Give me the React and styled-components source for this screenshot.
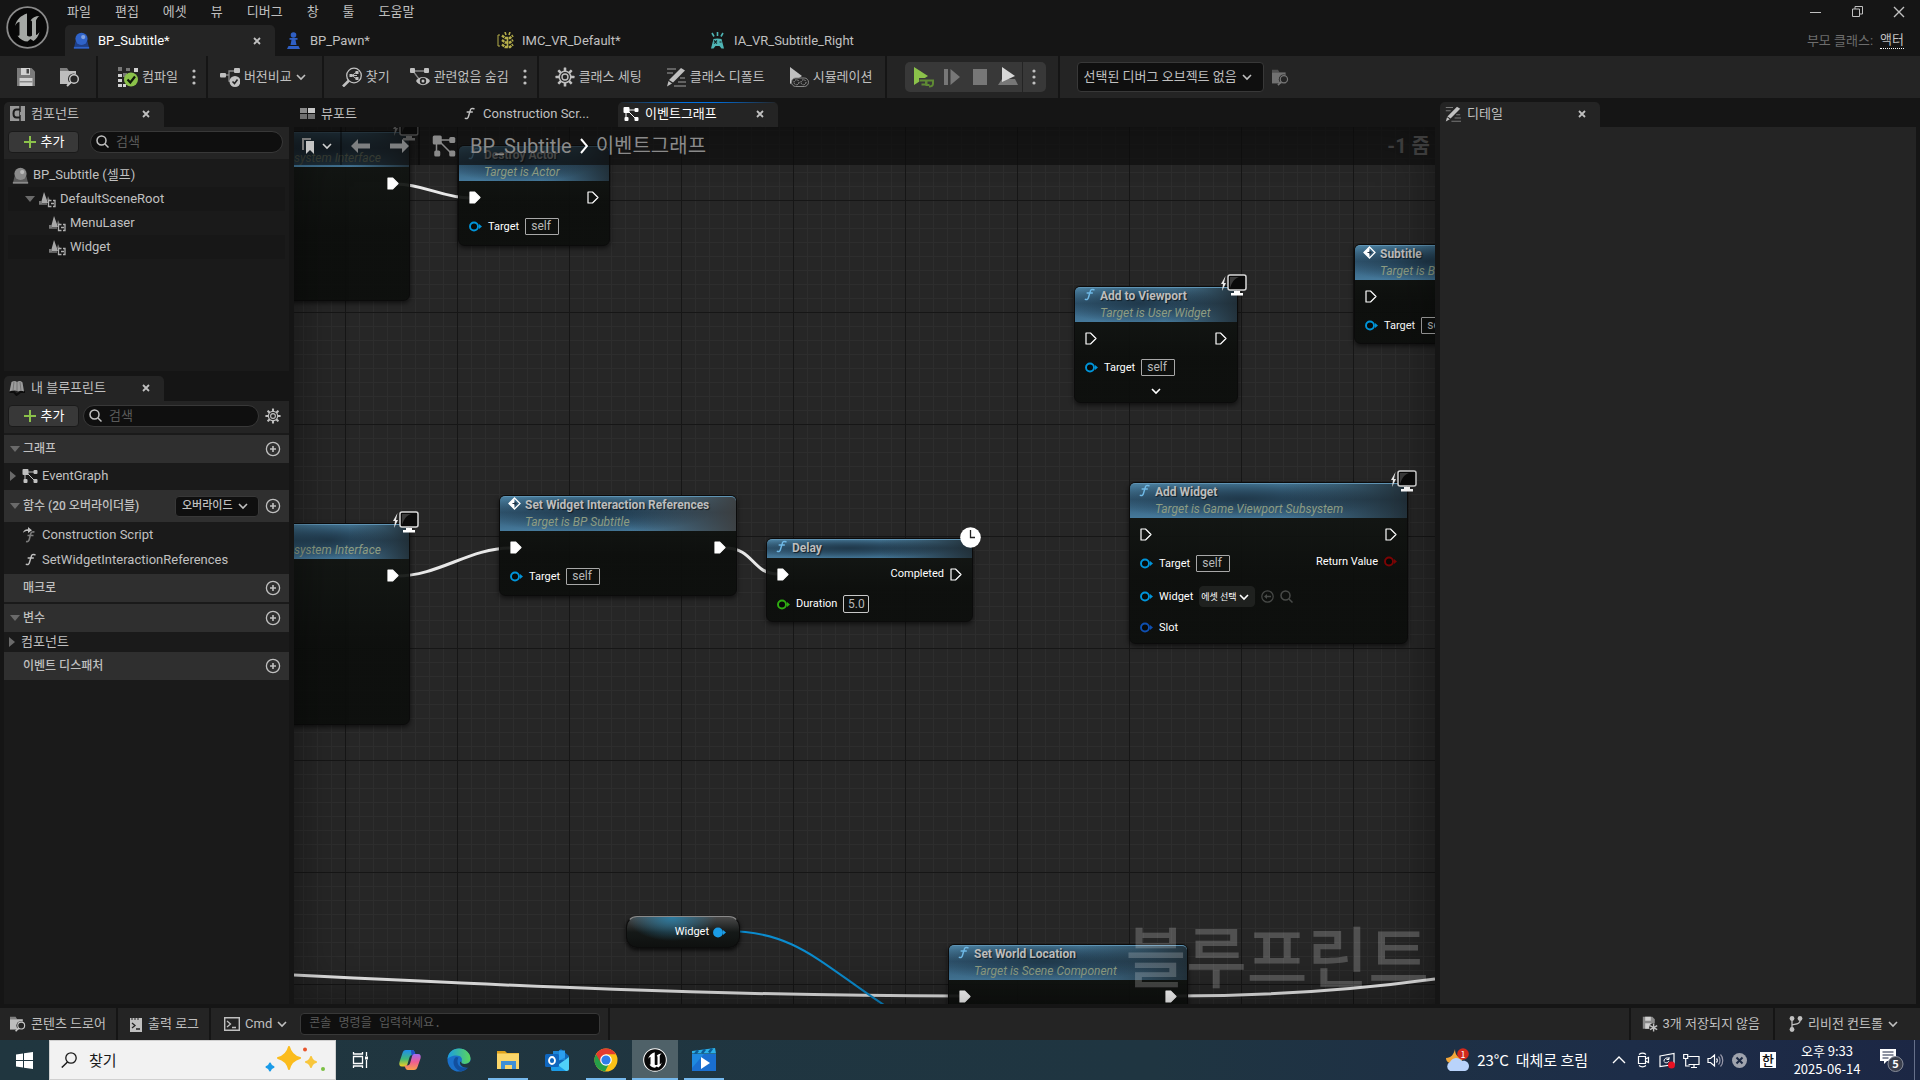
import { useState } from "react";
import styled, { createGlobalStyle, css } from "styled-components";

const colors = {
  frame: "#151515",
  panel: "#242424",
  recess: "#1a1a1a",
  header: "#2f2f2f",
  input: "#0f0f0f",
  line: "#383838",
  text: "#c0c0c0",
  bright: "#ffffff",
  dim: "#6d6d6d",
  green: "#8bc24a",
  blue: "#0070e0",
  object: "#0094d9",
};

const GlobalStyle = createGlobalStyle`
  * { box-sizing: border-box; }
  body {
    margin: 0;
    background: ${colors.frame};
    color: ${colors.text};
    font: 13px/16px Roboto, "Noto Sans CJK KR", sans-serif;
  }
  button, input, select {
    font: inherit;
    color: inherit;
    border: 0;
    margin: 0;
    padding: 0;
    background: none;
    outline: none;
  }
  svg { display: block; flex: none; }
`;

/* ---------- shell ---------- */

const Shell = styled.div`
  height: 100vh;
  display: flex;
  flex-direction: column;
  overflow: hidden;
`;

const Header = styled.header`
  display: flex;
  height: 56px;
  flex: none;
`;

const LogoBox = styled.div`
  width: 55px;
  padding: 6px;
`;

const HeaderMain = styled.div`
  flex: 1;
  display: flex;
  flex-direction: column;
`;

const MenuBar = styled.nav`
  display: flex;
  height: 25px;
  padding-bottom: 2px;
`;

const MenuItem = styled.button`
  padding: 0 12px;
`;

const WindowButtons = styled.div`
  display: flex;
  margin-left: auto;
`;

const WindowButton = styled.button`
  width: 42px;
  display: grid;
  place-items: center;
`;

const AssetTabs = styled.div`
  flex: 1;
  display: flex;
  gap: 2px;
  padding-left: 10px;
`;

const AssetTab = styled.div`
  width: 210px;
  display: flex;
  align-items: center;
  padding: 0 12px 0 8px;
  border-radius: 5px 5px 0 0;
  background: ${(p) => (p.$active ? colors.panel : "none")};
  color: ${(p) => (p.$active ? colors.bright : colors.text)};
`;

const TabLabel = styled.button`
  flex: 1;
  display: flex;
  align-items: center;
  text-align: left;
  white-space: nowrap;
  gap: ${(p) => p.$gap}px;
`;

const CloseButton = styled.button`
  width: 12px;
  height: 12px;
  display: grid;
  place-items: center;
  color: ${colors.text};
`;

const ParentClass = styled.div`
  margin-left: auto;
  padding-right: 16px;
  display: flex;
  align-items: center;
  gap: 7px;
  color: ${colors.dim};
`;

const ParentLink = styled.a`
  color: ${colors.text};
  text-decoration: none;
  border-bottom: 1px dotted ${colors.bright};
`;

/* ---------- toolbar ---------- */

const Toolbar = styled.div`
  display: flex;
  height: 42px;
  flex: none;
  background: ${colors.panel};
`;

const ToolGroup = styled.div`
  display: flex;
  align-items: center;
  padding: 0 ${(p) => p.$right ?? 6}px 0 ${(p) => p.$left ?? 6}px;
  border-right: 2px solid ${colors.frame};
`;

const ToolButton = styled.button`
  display: flex;
  align-items: center;
  gap: 4px;
  height: 30px;
  padding: 0 ${(p) => p.$pad ?? 10}px;
  white-space: nowrap;
`;

const DotsButton = styled.button`
  width: 12px;
  height: 30px;
  display: grid;
  place-items: center;
`;

const PlaySlot = styled(ToolGroup)`
  padding: 0 12px 0 18px;
`;

const PlayGroup = styled.div`
  display: flex;
  align-items: center;
  height: 30px;
  padding-left: 5px;
  border-radius: 5px;
  background: #383838;
`;

const PlayButton = styled.button`
  width: 28px;
  height: 30px;
  display: grid;
  place-items: center;
`;

const PlayOptions = styled(PlayButton)`
  width: 24px;
  border-left: 1px solid ${colors.panel};
`;

const DebugTools = styled.div`
  display: flex;
  align-items: center;
  gap: 8px;
  padding-left: 17px;
`;

const SelectBox = styled.div`
  display: grid;
  align-items: center;
  width: ${(p) => p.$width}px;
  height: ${(p) => p.$height}px;
  border: 1px solid ${(p) => p.$line ?? colors.line};
  border-radius: 4px;
  background: ${(p) => p.$fill ?? colors.input};
  font-size: ${(p) => p.$size ?? 13}px;
  & > * { grid-area: 1 / 1; }
  & > svg {
    justify-self: end;
    margin-right: ${(p) => p.$inset ?? 11}px;
    pointer-events: none;
  }
`;

const Select = styled.select`
  appearance: none;
  height: 100%;
  width: 100%;
  padding-left: ${(p) => p.$pad ?? 6}px;
`;

/* ---------- docked panels ---------- */

const Workspace = styled.main`
  flex: 1;
  min-height: 0;
  display: flex;
  gap: 5px;
  padding: 4px;
`;

const SideColumn = styled.aside`
  width: ${(p) => p.$width}px;
  display: flex;
  flex-direction: column;
  gap: 5px;
`;

const Dock = styled.section`
  display: flex;
  flex-direction: column;
  min-width: 0;
  ${(p) => (p.$height ? css`height: ${p.$height}px;` : css`flex: 1; min-height: 0;`)}
`;

const DockTabs = styled.div`
  display: flex;
  gap: 2px;
  height: 25px;
  flex: none;
`;

const DockTab = styled.div`
  width: 160px;
  display: flex;
  align-items: center;
  padding: 0 12px 2px 5px;
  border-radius: 5px 5px 0 0;
  background: ${(p) => (p.$active ? colors.panel : "none")};
  ${(p) =>
    p.$focused &&
    css`
      color: ${colors.bright};
      background:
        linear-gradient(90deg, transparent, ${colors.blue} 40%, ${colors.blue} 60%, transparent) top / 100% 1px no-repeat,
        ${colors.panel};
    `}
`;

const IconSlot = styled.span`
  width: 16px;
  display: grid;
  place-items: center;
`;

const AssetIcon = styled(IconSlot)`
  width: 17px;
`;

const DockBody = styled.div`
  flex: 1;
  min-height: 0;
  background: ${(p) => p.$fill ?? colors.recess};
`;

const SearchRow = styled.div`
  display: flex;
  align-items: center;
  gap: ${(p) => p.$gap}px;
  height: 32px;
  padding: 0 6px 3px 4px;
  background: ${colors.panel};
`;

const AddButton = styled.button`
  display: flex;
  align-items: center;
  justify-content: center;
  gap: 4px;
  width: 71px;
  height: 22px;
  border-radius: 4px;
  border: 1px solid #1a1a1a;
  background: #383838;
  color: ${colors.bright};
`;

const SearchBox = styled.label`
  flex: 1;
  min-width: 0;
  display: flex;
  align-items: center;
  gap: 7px;
  height: 22px;
  padding: 0 5px;
  border: 1px solid ${colors.line};
  border-radius: 11px;
  background: ${colors.input};
`;

const TextInput = styled.input`
  flex: 1;
  min-width: 0;
  &::placeholder { color: #5a5a5a; opacity: 1; }
`;

const IconButton = styled.button`
  display: grid;
  place-items: center;
  width: 20px;
  height: 20px;
`;

const Tree = styled.div`
  padding: 4px;
`;

const TreeRow = styled.button`
  display: flex;
  align-items: center;
  gap: 4px;
  width: 100%;
  height: 24px;
  padding-left: ${(p) => p.$indent}px;
  text-align: left;
  background: ${(p) => (p.$odd ? "#171717" : "none")};
`;

const Sections = styled.div`
  padding-top: 2px;
`;

const SectionHead = styled.div`
  display: flex;
  align-items: center;
  gap: 4px;
  height: ${(p) => p.$height ?? 28}px;
  margin-bottom: ${(p) => p.$gap ?? 0}px;
  padding: 0 6px;
  background: ${colors.header};
  font-size: 12px;
  font-weight: 500;
`;

const SectionTitle = styled.button`
  flex: 1;
  display: flex;
  align-items: center;
  gap: 3px;
  text-align: left;
`;

const CaretSlot = styled.span`
  width: 10px;
`;

const Members = styled.div`
  padding-bottom: ${(p) => p.$bottom ?? 0}px;
`;

const Member = styled.button`
  display: flex;
  align-items: center;
  gap: 4px;
  width: 100%;
  height: ${(p) => p.$height ?? 25}px;
  padding-left: ${(p) => p.$indent}px;
  text-align: left;
`;

/* ---------- graph ---------- */

const Canvas = styled.div`
  position: relative;
  flex: 1;
  min-height: 0;
  overflow: hidden;
  background:
    linear-gradient(90deg, #161616 1px, transparent 1px) 51px 0 / 112px 112px,
    linear-gradient(#161616 1px, transparent 1px) 0 73px / 112px 112px,
    linear-gradient(90deg, #2d2d2d 1px, transparent 1px) 9px 0 / 14px 14px,
    linear-gradient(#2d2d2d 1px, transparent 1px) 0 3px / 14px 14px,
    #262626;
`;

const Wires = styled.svg`
  position: absolute;
  left: 0;
  top: 0;
`;

const Vignette = styled.div`
  position: absolute;
  inset: 0;
  pointer-events: none;
  box-shadow: inset 0 0 50px rgba(0, 0, 0, 0.45);
`;

const Watermark = styled.div`
  position: absolute;
  right: 6px;
  bottom: 15px;
  font: 500 66px/72px "Noto Sans CJK KR", sans-serif;
  color: rgba(255, 255, 255, 0.2);
  pointer-events: none;
`;

const Crumbs = styled.div`
  position: absolute;
  inset: 0 0 auto;
  height: 38px;
  display: flex;
  align-items: center;
  background: rgba(12, 12, 12, 0.66);
`;

const CrumbTools = styled.div`
  display: flex;
  align-items: center;
  gap: ${(p) => p.$gap}px;
  height: 100%;
  padding: 0 ${(p) => p.$pad}px;
  border-right: 2px solid rgba(0, 0, 0, 0.35);
`;

const CrumbPath = styled.div`
  display: flex;
  align-items: center;
  gap: 8px;
  padding-left: 12px;
  font-size: 20px;
  line-height: 24px;
  color: #8a8a8a;
  button:first-of-type { padding-left: 6px; }
`;

const Zoom = styled.div`
  margin-left: auto;
  padding-right: 5px;
  font-size: 20px;
  font-weight: 700;
  line-height: 24px;
  color: #3c3c3c;
`;

const NodeBox = styled.article`
  position: absolute;
  left: ${(p) => p.$x}px;
  top: ${(p) => p.$y}px;
  width: ${(p) => p.$w}px;
  height: ${(p) => p.$h}px;
  border: 1px solid #0b0b0b;
  border-radius: 6px;
  background: linear-gradient(rgba(20, 24, 21, 0.93), rgba(12, 14, 12, 0.93) 60%);
  box-shadow: 0 2px 5px rgba(0, 0, 0, 0.6);
`;

const NodeHead = styled.div`
  display: flex;
  gap: 4px;
  height: ${(p) => (p.$short ? 19 : 35)}px;
  padding: 0 8px 0 ${(p) => (p.$clipped ? 19 : 8)}px;
  border-top: 1px solid #5f93b3;
  border-radius: 5px 5px 0 0;
  background:
    linear-gradient(90deg, transparent 55%, ${(p) => (p.$grey ? "rgba(60,60,60,.9)" : "rgba(30,40,46,.85)")} 100%),
    radial-gradient(ellipse 50% 60% at 40% 45%, #20394b, transparent),
    linear-gradient(#4a7f9f, #2f5570 45%, #467a9c);
`;

const NodeTitle = styled.h3`
  margin: 0;
  font-size: 12px;
  line-height: 17px;
  font-weight: 700;
  color: #bdbdbd;
  text-shadow: 1px 1px 1px rgba(0, 0, 0, 0.6);
  white-space: nowrap;
`;

const NodeNote = styled.p`
  margin: 0;
  font-size: 12px;
  line-height: 16px;
  font-style: italic;
  color: #8d9c82;
  white-space: nowrap;
`;

const NodeBody = styled.div`
  display: flex;
  justify-content: space-between;
  padding: 0 10px;
`;

const PinRow = styled.div`
  display: flex;
  align-items: center;
  justify-content: ${(p) => (p.$right ? "flex-end" : "flex-start")};
  gap: 6px;
  height: ${(p) => p.$h}px;
  font-size: 11px;
  color: #ffffff;
  white-space: nowrap;
`;

const SelfBox = styled.span`
  width: 34px;
  height: 17px;
  padding-left: 5px;
  font-size: 12px;
  line-height: 15px;
  border: 1px solid #a8a8a8;
  border-radius: 1px;
  color: #b8b8b8;
`;

const NumberBox = styled.input`
  width: 26px;
  height: 18px;
  font-size: 12px;
  text-align: center;
  border: 1px solid #c8c8c8;
  border-radius: 2px;
  color: #b8b8b8;
`;

const Expander = styled.button`
  display: grid;
  place-items: center;
  width: 100%;
  height: 22px;
`;

const Badge = styled.div`
  position: absolute;
  right: -10px;
  top: -13px;
`;

const VariableNode = styled.div`
  position: absolute;
  left: 332px;
  top: 789px;
  display: flex;
  align-items: center;
  justify-content: flex-end;
  gap: 4px;
  width: 114px;
  height: 32px;
  padding-right: 13px;
  border: 1px solid #0c0c0c;
  border-top-color: #8a8a8a;
  border-radius: 11px;
  font-size: 11px;
  color: #ffffff;
  background:
    radial-gradient(ellipse 40% 80% at 40% 0, #2d7ba0, transparent),
    linear-gradient(#4a4a4a, #151918 50%, #0e100f);
  box-shadow: 0 2px 4px rgba(0, 0, 0, 0.8);
`;

/* ---------- status bar ---------- */

const StatusBar = styled.footer`
  display: flex;
  flex: none;
  height: 32px;
  padding-right: 4px;
  background: ${colors.panel};
`;

const StatusGroup = styled.div`
  display: flex;
  align-items: center;
  gap: ${(p) => p.$gap ?? 4}px;
  padding: 0 ${(p) => p.$right ?? 10}px 0 ${(p) => p.$left ?? 10}px;
  border-right: 2px solid ${colors.frame};
  &:last-child { border: 0; }
  ${(p) =>
    p.$push &&
    css`
      margin-left: auto;
      border-left: 2px solid ${colors.frame};
    `}
`;

const StatusButton = styled.button`
  display: flex;
  align-items: center;
  gap: 5px;
  white-space: nowrap;
`;

const ConsoleInput = styled(TextInput)`
  flex: none;
  width: 300px;
  height: 22px;
  padding: 0 8px;
  border: 1px solid ${colors.line};
  border-radius: 4px;
  background: ${colors.input};
  font-family: "Liberation Mono", "Noto Sans CJK KR", monospace;
  font-size: 12px;
`;

/* ---------- windows taskbar ---------- */

const Taskbar = styled.footer`
  display: flex;
  flex: none;
  height: 40px;
  padding-right: 5px;
  color: #fff;
  font-family: "Noto Sans CJK KR", sans-serif;
  background: linear-gradient(90deg, #20363f, #1f3541 60%, #1d2d48 85%, #1c2744);
`;

const TaskButton = styled.button`
  width: 49px;
  display: grid;
  place-items: center;
  background:
    linear-gradient(#76b9ed, #76b9ed) bottom / ${(p) => (p.$running ? (p.$active ? 46 : 40) : 0)}px 2px no-repeat,
    linear-gradient(#4f6168, #4f6168) center / ${(p) => (p.$active ? 46 : 0)}px 100% no-repeat;
`;

const TaskSearch = styled.label`
  width: 287px;
  display: flex;
  align-items: center;
  gap: 12px;
  padding: 0 7px 0 11px;
  border: 1px solid #d0d0d0;
  background: #f2f2f2;
  color: #1a1a1a;
  font-size: 15px;
  input::placeholder { color: #1a1a1a; opacity: 1; }
`;

const Tray = styled.div`
  display: flex;
  align-items: stretch;
  margin-left: auto;
  border-right: 1px solid #66708a;
`;

const TrayButton = styled.button`
  width: ${(p) => p.$width ?? 24}px;
  display: grid;
  place-items: center;
`;

const Weather = styled.button`
  display: flex;
  align-items: center;
  gap: 8px;
  padding-right: 19px;
  font-size: 15px;
  white-space: pre;
`;

const ImeMark = styled.span`
  width: 16px;
  height: 16px;
  background: #fff;
  color: #111;
  font-size: 13px;
  font-weight: 500;
  line-height: 15px;
`;

const Clock = styled.button`
  width: 84px;
  font-size: 13px;
  line-height: 18px;
`;

/* ---------- icons ---------- */

const Svg = ({ w = 20, h = w, box = "0 0 20 20", children, ...rest }) => (
  <svg width={w} height={h} viewBox={box} fill="currentColor" aria-hidden="true" {...rest}>
    {children}
  </svg>
);

const Chevron = ({ color = "currentColor" }) => (
  <Svg w={10} box="0 0 10 10">
    <path d="M1 3l4 4 4-4" fill="none" stroke={color} strokeWidth="1.6" />
  </Svg>
);

const Cross = () => (
  <Svg w={8} box="0 0 8 8">
    <path d="M1 1l6 6M7 1L1 7" stroke="currentColor" strokeWidth="1.8" />
  </Svg>
);

const Dots = () => (
  <Svg w={4} h={16} box="0 0 4 16">
    <circle cx="2" cy="2" r="1.6" />
    <circle cx="2" cy="8" r="1.6" />
    <circle cx="2" cy="14" r="1.6" />
  </Svg>
);

const Magnifier = ({ color = "currentColor" }) => (
  <Svg w={13} box="0 0 13 13">
    <circle cx="5.5" cy="5.5" r="4.5" fill="none" stroke={color} strokeWidth="1.5" />
    <path d="M9 9l3.5 3.5" stroke={color} strokeWidth="1.5" />
  </Svg>
);

const Plus = () => (
  <Svg w={14} box="0 0 14 14">
    <path d="M7 1v12M1 7h12" stroke={colors.green} strokeWidth="2" />
  </Svg>
);

const PlusCircle = () => (
  <Svg w={16} box="0 0 16 16">
    <circle cx="8" cy="8" r="6.6" fill="none" stroke="currentColor" strokeWidth="1.3" />
    <path d="M8 5v6M5 8h6" stroke="currentColor" strokeWidth="1.6" />
  </Svg>
);

const Caret = ({ open }) => (
  <Svg w={10} box="0 0 10 10">
    <path d={open ? "M0 2h10L5 8z" : "M2 0v10l6-5z"} fill="#6a6a6a" />
  </Svg>
);

const GraphIcon = ({ w = 16 }) => (
  <Svg w={w} box="0 0 16 16">
    <path d="M3 4v9M5 4h9M5 5l8 8" stroke="currentColor" />
    <rect x="0.5" y="1" width="6" height="6" rx="1" />
    <rect x="11.5" y="2" width="4" height="4" rx="1" />
    <rect x="11.5" y="11" width="4" height="4" rx="1" />
    <rect x="1.5" y="11" width="4" height="4" rx="1" />
  </Svg>
);

const FunctionIcon = ({ color = "currentColor" }) => (
  <Svg w={13} box="0 0 14 14">
    <path
      d="M2.5 12.2c2 .9 3-.3 3.5-2.4L7.7 4C8.2 2 9.5 1 11.8 1.9M4.5 5.5H10"
      fill="none"
      stroke={color}
      strokeWidth="1.6"
      strokeLinecap="round"
    />
  </Svg>
);

const OverrideIcon = () => (
  <Svg w={16} box="0 0 16 16">
    <path d="M4 14.5c2 .5 3-.5 3.4-2.5l1.2-5c.4-1.8 1.7-2.5 3.9-2M5.5 8.5h6" fill="none" stroke="#7c7c7c" strokeWidth="1.6" />
    <path d="M1 6c.5-3 2.5-4 5-3.8V0l4 3.2L6 6V4C4 3.9 2.5 4.2 1 6z" />
  </Svg>
);

const EventIcon = () => (
  <Svg w={13} box="0 0 13 13">
    <path d="M6.5 1L12 6.5 6.5 12 1 6.5z" fill="none" stroke="#fff" strokeWidth="1.3" />
    <path d="M6.5 1v11L1 6.5z" fill="#fff" />
    <path d="M4.5 6h2V4.5l2.5 2-2.5 2V7h-2z" fill="#234" />
  </Svg>
);

const Gear = ({ w = 20 }) => (
  <Svg w={w}>
    {[0, 45, 90, 135].map((a) => (
      <rect key={a} x="8.7" y="0.5" width="2.6" height="19" rx="0.5" transform={`rotate(${a} 10 10)`} />
    ))}
    <circle cx="10" cy="10" r="6.5" />
    <circle cx="10" cy="10" r="5" fill={colors.panel} />
    <circle cx="10" cy="10" r="3" fill="none" stroke="currentColor" strokeWidth="1.4" />
  </Svg>
);

const SaveIcon = () => (
  <Svg>
    <path d="M1 1h14.5L19 4.5V19H1z" fill="#7b7b7b" />
    <path d="M5 1h9v7H5z" fill="#d0d0d0" />
    <path d="M10.5 2H13v4.5h-2.5z" fill="#444" />
    <path d="M3.5 11h13v8h-13z" fill="#d0d0d0" />
    <path d="M3.5 14h13v1.5h-13z" fill="#8a8a8a" />
  </Svg>
);

const FolderFind = ({ w = 20, ...rest }) => (
  <Svg w={w} {...rest}>
    <path d="M0 1h7l2 3H0z" fill="#808080" />
    <path d="M0 4h16v13H0z" fill="#bdbdbd" />
    <circle cx="13.5" cy="12" r="5.5" fill={colors.panel} />
    <circle cx="14" cy="12" r="4.3" fill="none" stroke="#c8c8c8" strokeWidth="1.4" />
    <path d="M11 15l-4 4" stroke="#c8c8c8" strokeWidth="2" />
  </Svg>
);

const CompileIcon = () => (
  <Svg>
    <path d="M0 7h4v3H0zM0 12h4v3H0zM0 17h4v3H0zM16 1h4v4h-4zM5 17h3v3H5z" fill="#d0d0d0" />
    <path d="M0 0h4v4H0zM8 1h4v3H8zM5 6h4v4H5z" fill="#777" />
    <circle cx="13" cy="12.5" r="7" fill={colors.green} />
    <path d="M9.5 12.5l2.8 3L17 9.5" fill="none" stroke="#10190a" strokeWidth="2.2" />
  </Svg>
);

const DiffIcon = () => (
  <Svg>
    <path d="M5 8h4V4h5M9 8v6h4" fill="none" stroke="#888" strokeWidth="1.3" />
    <rect x="0" y="6" width="6" height="4.5" rx="1" />
    <rect x="14" y="1" width="6" height="5" rx="1" />
    <circle cx="15" cy="14.5" r="5.5" />
    <path d="M12.5 14.5l2 2 3-4" fill="none" stroke="#222" strokeWidth="1.6" />
  </Svg>
);

const FindIcon = () => (
  <Svg>
    <circle cx="12" cy="8.5" r="7.3" fill="none" stroke="currentColor" strokeWidth="1.3" />
    <path d="M7 13.5l-6 6" stroke="currentColor" strokeWidth="2.6" />
    <path d="M10 8.5h5M10 8.5l4-3M10 8.5l4 3" stroke="currentColor" />
    <path d="M7.5 7h3v3h-3zM13.5 4h3v3h-3zM13.5 10h3v3h-3z" />
  </Svg>
);

const HideIcon = () => (
  <Svg>
    <path d="M3 4h13M3 4l6 8" stroke="#888" strokeWidth="1.3" />
    <rect x="0" y="1" width="5" height="5" rx="1" />
    <rect x="14" y="1" width="5" height="5" rx="1" />
    <path d="M6 14c3-5.5 11-5.5 14 0-3 5.5-11 5.5-14 0z" />
    <circle cx="13" cy="14" r="3.2" fill={colors.panel} />
    <circle cx="13" cy="14" r="1.5" />
  </Svg>
);

const PencilIcon = ({ w = 20 }) => (
  <Svg w={w}>
    <path d="M1 2h9M1 6h6M12 15h8M8 19h12M14 11h5" stroke="#777" strokeWidth="1.3" />
    <path d="M15 1l4 2.5-12 12L3 13z" />
    <path d="M2.5 14L6 16.5l-5 3z" />
  </Svg>
);

const SimulateIcon = () => (
  <Svg>
    <path d="M1 0l12 9L1 17z" />
    <rect x="2.5" y="11" width="17" height="8.5" rx="4.2" fill={colors.panel} stroke="#888" />
    <circle cx="7.5" cy="15.3" r="2.5" fill="none" stroke="#aaa" strokeDasharray="1.5 1" />
    <circle cx="14.5" cy="15.3" r="2.5" fill="none" stroke="#aaa" strokeDasharray="1.5 1" />
  </Svg>
);

const PlayIcon = () => (
  <Svg w={22} box="0 0 22 22">
    <path d="M1 1l14 9L1 19z" fill={colors.green} />
    <path d="M6 12h15v4c0 3-2 5-4 5h-1v-4h-2v4H7z" fill="#383838" />
    <path d="M7 14.5h6v4H8.5M14 14.5h6v3c0 2-2 3-4 3M13.5 15v4h3" fill="none" stroke="#5f8a34" strokeWidth="2" />
  </Svg>
);

const StepIcon = () => (
  <Svg w={18} box="0 0 18 18" fill="#777">
    <path d="M1 1h4v16H1zM7.5 1L17 9l-9.5 8z" />
  </Svg>
);

const StopIcon = () => (
  <Svg w={16} box="0 0 16 16" fill="#777">
    <path d="M1 0h14v16H1z" />
  </Svg>
);

const EjectIcon = () => (
  <Svg>
    <path d="M4 12h13l3 6H0z" fill="#777" />
    <path d="M4 0l13 9-13 6z" fill="#d8d8d8" />
  </Svg>
);

const SphereIcon = ({ color = "#2f63c9", shade = "#1f3f86" }) => (
  <Svg w={17}>
    <path d="M3 11L1 19.5h18L17 11z" fill={shade} />
    <circle cx="10" cy="8" r="7.2" fill={color} />
    <circle cx="12" cy="6" r="2.5" fill="#fff" opacity="0.4" />
    <path d="M1 17.5h18v2H1z" fill={color} />
  </Svg>
);

const PawnIcon = () => (
  <Svg w={15} h={17} box="0 0 15 17">
    <g fill="#2f5fc4">
      <circle cx="7.5" cy="3" r="2.8" />
      <path d="M3.5 6h8v1.8h-2l1 5.2h-6l1-5.2h-2zM2.5 14h10l1.5 3H1z" />
    </g>
  </Svg>
);

const MappingIcon = () => (
  <Svg w={17} box="0 0 17 17">
    <g fill="none" stroke="#b5ae4a">
      <path d="M3 3H1v11h2" />
      <path d="M5 3.5L8 6h5l3-2.5M5 8l3 2.5h5L16 8M5 12.5L8 15h5l3-2.5" strokeWidth="2.3" strokeDasharray="3 0.8" />
      <path d="M8 0l1 3M13 0l-1 3M10.5 5v10" strokeWidth="1.6" />
    </g>
  </Svg>
);

const ActionIcon = () => (
  <Svg w={15} h={17} box="0 0 15 17">
    <path d="M2 1l2 3.5M7.5 0v4M13 1l-2 3.5" stroke="#4fb5b5" strokeWidth="1.6" />
    <path d="M3.5 7c2-.8 6-.8 8 0L14 16.5h-2.5l-2-2.5h-4l-2 2.5H1z" fill="#4fb5b5" />
    <path d="M4 8.5l3 3m0-3l-3 3M9.5 10h2" stroke="#152525" strokeWidth="1.2" />
  </Svg>
);

const ComponentIcon = () => (
  <Svg w={15} box="0 0 15 15">
    <path d="M0 0h15v15H0z" fill="#989898" />
    <path d="M10 3.5H6.5c-2 0-3 1.5-3 4s1 4 3 4H10" fill="none" stroke="#1c1c1c" strokeWidth="2" />
    <path d="M10 0v15" stroke="#1c1c1c" strokeWidth="1.4" />
    <path d="M10 6h2v3h-2z" fill="#989898" />
  </Svg>
);

const SceneIcon = () => (
  <Svg w={17} box="0 0 17 17">
    <path d="M5 1l4 11H2z" fill="#a8a8a8" />
    <path d="M0 10h3v3H0zM9 5l2 4.5H8z" fill="#777" />
    <path d="M0 13h8" stroke="#777" strokeWidth="1.5" />
    <path d="M12.5 9.5h-3v6h3M14 9.5h2v6h-2M12 12.5h3" fill="none" stroke="#b0b0b0" strokeWidth="1.3" />
  </Svg>
);

const ViewportIcon = () => (
  <Svg w={15} h={12} box="0 0 15 12">
    <path d="M0 0h7v5H0z" fill="#8a8a8a" />
    <path d="M8 0h7v5H8z" fill="#c8c8c8" />
    <path d="M0 6h7v5H0zM8 6h7v5H8z" fill="#6f6f6f" />
  </Svg>
);

const BookIcon = () => (
  <Svg w={16} box="0 0 16 16">
    <path d="M.5 12H5l2.5 3 4-3H16" fill="none" stroke="#0c0c0c" strokeWidth="2" />
    <path d="M2.5 2C4.500.5 6.500.5 8 2c2-1.500 4-1 5.500.5l1.500 9c-2-1-4-1-6 0-2-1-5.500-1.500-8.500 0z" fill="#9c9c9c" />
    <path d="M5 1.5l-1 9M8 2v9M11 2l1 8.500" stroke="#6a6a6a" strokeWidth="0.8" />
  </Svg>
);

const BookmarkIcon = () => (
  <Svg w={13} h={17} box="0 0 13 17">
    <path d="M0 0h9v2H2v10H0z" fill="#777" />
    <path d="M4 3h8v13l-4-4-4 4z" fill="#c4c4c4" />
  </Svg>
);

const ArrowIcon = ({ flip }) => (
  <Svg w={19} h={14} box="0 0 19 14" color="#7d7f80">
    <path d={flip ? "M19 7l-7-7v4.500H0v5h12V14z" : "M0 7l7-7v4.500h12v5H7V14z"} />
  </Svg>
);

const MonitorBadge = () => (
  <Svg w={26} h={22} box="0 0 26 22">
    <path d="M4.5 2L0 10h2l-1 7 4-8H3z" fill="#e8e8e8" />
    <rect x="7" y="1" width="18" height="15" rx="2" fill="#0a0a0a" stroke="#d8d8d8" strokeWidth="1.5" />
    <path d="M9 14c2-6 4-9 9-11H9z" fill="#3a3a3a" />
    <path d="M13 17h6v2h3v2.5H10V19h3z" fill="#fff" />
  </Svg>
);

const ClockBadge = () => (
  <Svg w={22} box="0 0 22 22">
    <circle cx="10.5" cy="11.5" r="10.3" fill="#fff" />
    <path d="M10.5 4v7.500H15" fill="none" stroke="#222" strokeWidth="1.3" />
  </Svg>
);

const EngineMark = ({ w, rim, ink }) => (
  <Svg w={w} box="0 0 43 43">
    <circle cx="21.5" cy="21.5" r="20.3" fill="#080808" stroke={rim} strokeWidth="1.8" />
    <path
      transform="translate(1 1.5)"
      fill={ink}
      d="M20 6C14 8 9.500 12 8 18.500c1.500-3 3.500-4.500 4.500-4V27c0 1.500-1 1.500-2 1.200C13 32 17 34 20.500 34l3-2.500 3 2c3-2 5-5 6-9-1 1.500-2.500 3-3.500 3V13c.5-1.800 2-3.500 3.500-4.500-4 0-7.500 2-9 4.500 1 0 1.500.5 1.500 1.500V28c-1 1.200-3.500 1.500-5 0V11z"
    />
  </Svg>
);

const ExecPin = ({ filled }) => (
  <Svg w={12} h={13} box="0 0 12 13">
    <path d="M1 1h4.500L11 6.500 5.500 12H1z" fill={filled ? "#fff" : "none"} stroke="#fff" strokeWidth="1.2" strokeLinejoin="round" />
  </Svg>
);

const DataPin = ({ color = colors.object, filled }) => (
  <Svg w={13} h={11} box="0 0 13 11">
    <circle cx="5" cy="5.5" r="4" fill={filled ? color : "#070a08"} stroke={color} strokeWidth="1.9" />
    <path d="M10 3l3 2.500L10 8z" fill={color} />
  </Svg>
);

/* ---------- graph nodes ---------- */

function GraphNode({ x, y, w, h, title, note, icon, short, clipped, grey, badge, children }) {
  return (
    <NodeBox $x={x} $y={y} $w={w} $h={h}>
      <NodeHead $short={short} $clipped={clipped} $grey={grey}>
        {icon === "event" && <EventIcon />}
        {icon === "function" && <FunctionIcon color="#6fb9e6" />}
        <div>
          <NodeTitle>{title || "\u00a0"}</NodeTitle>
          {note && <NodeNote>{note}</NodeNote>}
        </div>
      </NodeHead>
      {children}
      {badge && <Badge>{badge}</Badge>}
    </NodeBox>
  );
}

function TargetRow() {
  return (
    <PinRow $h={25}>
      <DataPin />
      Target
      <SelfBox>self</SelfBox>
    </PinRow>
  );
}

function CallBody({ linked, noOut }) {
  return (
    <NodeBody>
      <div>
        <PinRow $h={33}><ExecPin filled={linked} /></PinRow>
        <TargetRow />
      </div>
      {!noOut && (
        <PinRow $h={33}><ExecPin filled={linked === "both"} /></PinRow>
      )}
    </NodeBody>
  );
}

function SubsystemNode({ y, h }) {
  return (
    <GraphNode x={-20} y={y} w={136} h={h} note="system Interface" clipped badge={<MonitorBadge />}>
      <NodeBody>
        <span />
        <PinRow $h={33}><ExecPin filled /></PinRow>
      </NodeBody>
    </GraphNode>
  );
}

function DelayNode() {
  const [duration, setDuration] = useState("5.0");
  return (
    <GraphNode x={472} y={411} w={207} h={84} icon="function" title="Delay" short badge={<ClockBadge />}>
      <NodeBody>
        <div>
          <PinRow $h={32}><ExecPin filled /></PinRow>
          <PinRow as="label" $h={28}>
            <DataPin color="#2fae12" />
            Duration
            <NumberBox value={duration} onChange={(e) => setDuration(e.target.value)} />
          </PinRow>
        </div>
        <PinRow $h={32}>
          Completed
          <ExecPin />
        </PinRow>
      </NodeBody>
    </GraphNode>
  );
}

function AddWidgetNode() {
  return (
    <GraphNode x={835} y={355} w={279} h={162} icon="function" title="Add Widget" note="Target is Game Viewport Subsystem" badge={<MonitorBadge />}>
      <NodeBody>
        <div>
          <PinRow $h={33}><ExecPin /></PinRow>
          <TargetRow />
          <PinRow $h={41}>
            <DataPin />
            <label htmlFor="widget-asset">Widget</label>
            <SelectBox $width={56} $height={21} $fill="#1f211f" $line="#1f211f" $size={9} $inset={5}>
              <Select id="widget-asset" $pad={1}>
                <option>에셋 선택</option>
              </Select>
              <Chevron />
            </SelectBox>
            <Svg w={13} box="0 0 13 13" color="#484a48">
              <circle cx="6.5" cy="6.5" r="5.7" fill="none" stroke="currentColor" strokeWidth="1.2" />
              <path d="M3 6.500L6 4v1.800h4v1.400H6V9z" />
            </Svg>
            <Magnifier color="#484a48" />
          </PinRow>
          <PinRow $h={21}>
            <DataPin color="#0f4fb0" />
            Slot
          </PinRow>
        </div>
        <div>
          <PinRow $h={33} $right><ExecPin /></PinRow>
          <PinRow $h={21} $right>
            Return Value
            <DataPin color="#7d0505" />
          </PinRow>
        </div>
      </NodeBody>
    </GraphNode>
  );
}

function EventGraph() {
  return (
    <Canvas>
      <Wires width="100%" height="100%" fill="none" stroke="#e8e8e8" strokeWidth="3">
        <path d="M103 57C128 57 150 71 176 71" />
        <path d="M103 449C145 449 175 421 217 421" />
        <path d="M431 421C460 421 458 447 484 447" />
        <path d="M0 848C200 858 430 869 666 869" />
        <path d="M882 869C970 869 1060 863 1141 852" />
        <path d="M432 804C500 804 525 835 590 878" stroke="#0b8ccf" strokeWidth="2" />
      </Wires>

      <SubsystemNode y={4} h={170} />
      <SubsystemNode y={396} h={202} />
      <GraphNode x={164} y={18} w={152} h={101} icon="function" title="Destroy Actor" note="Target is Actor">
        <CallBody linked="in" />
      </GraphNode>
      <GraphNode x={780} y={159} w={164} h={117} icon="function" title="Add to Viewport" note="Target is User Widget" badge={<MonitorBadge />}>
        <CallBody />
        <Expander aria-label="고급"><Chevron color="#fff" /></Expander>
      </GraphNode>
      <GraphNode x={1060} y={117} w={180} h={100} icon="event" title="Subtitle" note="Target is BP Subtitle">
        <CallBody noOut />
      </GraphNode>
      <GraphNode x={205} y={368} w={238} h={101} icon="event" title="Set Widget Interaction References" note="Target is BP Subtitle" grey>
        <CallBody linked="both" />
      </GraphNode>
      <DelayNode />
      <AddWidgetNode />
      <GraphNode x={654} y={817} w={240} h={120} icon="function" title="Set World Location" note="Target is Scene Component">
        <CallBody linked="both" />
      </GraphNode>
      <VariableNode>
        Widget
        <DataPin color="#1b9ce6" filled />
      </VariableNode>

      <Vignette />
      <Watermark>블루프린트</Watermark>

      <Crumbs>
        <CrumbTools $gap={7} $pad={8}>
          <BookmarkIcon />
          <Chevron color="#d0d0d0" />
        </CrumbTools>
        <CrumbTools $gap={20} $pad={9}>
          <ArrowIcon />
          <ArrowIcon flip />
        </CrumbTools>
        <CrumbPath>
          <GraphIcon w={24} />
          <button>BP_Subtitle</button>
          <Svg w={8} h={16} box="0 0 8 16">
            <path d="M1 1l6 7-6 7" fill="none" stroke="#fff" strokeWidth="2" />
          </Svg>
          <button>이벤트그래프</button>
        </CrumbPath>
        <Zoom>-1 줌</Zoom>
      </Crumbs>
    </Canvas>
  );
}

/* ---------- side panels ---------- */

function PanelTab({ icon, label, closable = true, active = true, focused }) {
  return (
    <DockTab $active={active} $focused={focused}>
      <TabLabel $gap={6}>
        <IconSlot>{icon}</IconSlot>
        {label}
      </TabLabel>
      {closable && (
        <CloseButton aria-label={`${label} 닫기`}>
          <Cross />
        </CloseButton>
      )}
    </DockTab>
  );
}

function Search() {
  return (
    <SearchBox>
      <Magnifier />
      <TextInput placeholder="검색" aria-label="검색" />
    </SearchBox>
  );
}

function Section({ title, open, height, gap, children }) {
  return (
    <SectionHead $height={height} $gap={gap}>
      <SectionTitle>
        {open ? <Caret open /> : <CaretSlot />}
        {title}
      </SectionTitle>
      {children}
      <IconButton aria-label={`${title} 추가`}>
        <PlusCircle />
      </IconButton>
    </SectionHead>
  );
}

const components = [
  { name: "DefaultSceneRoot", indent: 17, odd: true, parent: true },
  { name: "MenuLaser", indent: 41 },
  { name: "Widget", indent: 41, odd: true },
];

function LeftColumn() {
  return (
    <SideColumn $width={285}>
      <Dock $height={269}>
        <DockTabs>
          <PanelTab icon={<ComponentIcon />} label="컴포넌트" />
        </DockTabs>
        <SearchRow $gap={11}>
          <AddButton><Plus />추가</AddButton>
          <Search />
        </SearchRow>
        <DockBody>
          <Tree>
            <TreeRow $indent={4}>
              <SphereIcon color="#8a8a8a" shade="#5a5a5a" />
              BP_Subtitle (셀프)
            </TreeRow>
            {components.map((c) => (
              <TreeRow key={c.name} $indent={c.indent} $odd={c.odd}>
                {c.parent && <Caret open />}
                <SceneIcon />
                {c.name}
              </TreeRow>
            ))}
          </Tree>
        </DockBody>
      </Dock>

      <Dock>
        <DockTabs>
          <PanelTab icon={<BookIcon />} label="내 블루프린트" />
        </DockTabs>
        <SearchRow $gap={4}>
          <AddButton><Plus />추가</AddButton>
          <Search />
          <IconButton aria-label="설정"><Gear w={16} /></IconButton>
        </SearchRow>
        <DockBody>
          <Sections>
            <Section title="그래프" open />
            <Members $bottom={2}>
              <Member $indent={4}>
                <Caret />
                <GraphIcon />
                EventGraph
              </Member>
            </Members>
            <Section title="함수 (20 오버라이더블)" open height={32}>
              <SelectBox $width={84} $height={21} $size={11} $inset={10}>
                <Select aria-label="오버라이드">
                  <option>오버라이드</option>
                </Select>
                <Chevron />
              </SelectBox>
            </Section>
            <Members $bottom={2}>
              <Member $indent={18}>
                <OverrideIcon />
                Construction Script
              </Member>
              <Member $indent={18}>
                <IconSlot><FunctionIcon /></IconSlot>
                SetWidgetInteractionReferences
              </Member>
            </Members>
            <Section title="매크로" gap={2} />
            <Section title="변수" open />
            <Member $height={20} $indent={3}>
              <Caret />
              컴포넌트
            </Member>
            <Section title="이벤트 디스패처" />
          </Sections>
        </DockBody>
      </Dock>
    </SideColumn>
  );
}

/* ---------- top ---------- */

const menus = ["파일", "편집", "에셋", "뷰", "디버그", "창", "툴", "도움말"];

const assets = [
  { name: "BP_Subtitle*", icon: <SphereIcon />, active: true },
  { name: "BP_Pawn*", icon: <PawnIcon /> },
  { name: "IMC_VR_Default*", icon: <MappingIcon /> },
  { name: "IA_VR_Subtitle_Right", icon: <ActionIcon /> },
];

function TopBar() {
  return (
    <Header>
      <LogoBox><EngineMark w={43} rim="#8a8a8a" ink="#a5a8a5" /></LogoBox>
      <HeaderMain>
        <MenuBar>
          {menus.map((m) => (
            <MenuItem key={m}>{m}</MenuItem>
          ))}
          <WindowButtons>
            <WindowButton aria-label="최소화">
              <Svg w={11} box="0 0 11 11"><path d="M0 6.500h11" stroke="currentColor" /></Svg>
            </WindowButton>
            <WindowButton aria-label="이전 크기로">
              <Svg w={11} box="0 0 11 11">
                <path d="M.5 3h7v7.500h-7zM3 3V.5h7.500V8h-3" fill="none" stroke="currentColor" />
              </Svg>
            </WindowButton>
            <WindowButton aria-label="닫기">
              <Svg w={12} box="0 0 12 12"><path d="M1 1l10 10M11 1L1 11" stroke="currentColor" strokeWidth="1.4" /></Svg>
            </WindowButton>
          </WindowButtons>
        </MenuBar>
        <AssetTabs>
          {assets.map((a) => (
            <AssetTab key={a.name} $active={a.active}>
              <TabLabel $gap={8}>
                <AssetIcon>{a.icon}</AssetIcon>
                {a.name}
              </TabLabel>
              {a.active && (
                <CloseButton aria-label="탭 닫기"><Cross /></CloseButton>
              )}
            </AssetTab>
          ))}
          <ParentClass>
            부모 클래스:
            <ParentLink href="#actor">액터</ParentLink>
          </ParentClass>
        </AssetTabs>
      </HeaderMain>
    </Header>
  );
}

function MainToolbar() {
  return (
    <Toolbar>
      <ToolGroup $right={2}>
        <ToolButton aria-label="저장"><SaveIcon /></ToolButton>
        <ToolButton aria-label="찾아보기" $pad={14}><FolderFind /></ToolButton>
      </ToolGroup>
      <ToolGroup $left={10}>
        <ToolButton><CompileIcon />컴파일</ToolButton>
        <DotsButton aria-label="컴파일 옵션"><Dots /></DotsButton>
      </ToolGroup>
      <ToolGroup $left={2}>
        <ToolButton><DiffIcon />버전비교<Chevron /></ToolButton>
      </ToolGroup>
      <ToolGroup $left={8}>
        <ToolButton><FindIcon />찾기</ToolButton>
        <ToolButton><HideIcon />관련없음 숨김</ToolButton>
        <DotsButton aria-label="숨김 옵션"><Dots /></DotsButton>
      </ToolGroup>
      <ToolGroup $left={4} $right={0}>
        <ToolButton $pad={12}><Gear />클래스 세팅</ToolButton>
        <ToolButton $pad={12}><PencilIcon />클래스 디폴트</ToolButton>
        <ToolButton $pad={12}><SimulateIcon />시뮬레이션</ToolButton>
      </ToolGroup>
      <PlaySlot>
        <PlayGroup>
          <PlayButton aria-label="플레이"><PlayIcon /></PlayButton>
          <PlayButton aria-label="프레임 건너뛰기"><StepIcon /></PlayButton>
          <PlayButton aria-label="중지"><StopIcon /></PlayButton>
          <PlayButton aria-label="꺼내기"><EjectIcon /></PlayButton>
          <PlayOptions aria-label="플레이 옵션"><Dots /></PlayOptions>
        </PlayGroup>
      </PlaySlot>
      <DebugTools>
        <SelectBox $width={187} $height={30}>
          <Select aria-label="디버그 오브젝트">
            <option>선택된 디버그 오브젝트 없음</option>
          </Select>
          <Chevron />
        </SelectBox>
        <FolderFind w={17} opacity="0.5" />
      </DebugTools>
    </Toolbar>
  );
}

/* ---------- bottom ---------- */

function EditorStatus() {
  return (
    <StatusBar>
      <StatusGroup>
        <StatusButton><FolderFind w={16} />콘텐츠 드로어</StatusButton>
      </StatusGroup>
      <StatusGroup $left={11}>
        <StatusButton>
          <Svg w={14} h={16} box="0 0 14 16">
            <path d="M1 2h12v14H1z" />
            <path d="M3 0v4M6 0v4M9 0v4" stroke="#242424" />
            <path d="M3 7l3 2.500L3 12M7 13h4" fill="none" stroke="#222" strokeWidth="1.3" />
          </Svg>
          출력 로그
        </StatusButton>
      </StatusGroup>
      <StatusGroup $left={13} $right={8} $gap={13}>
        <StatusButton>
          <Svg w={16} box="0 0 16 16">
            <path d="M.7 1.700h14.600v12.600H.7z" fill="none" stroke="currentColor" strokeWidth="1.4" />
            <path d="M3 5l3.500 3L3 11M8 11.500h4" fill="none" stroke="currentColor" strokeWidth="1.3" />
          </Svg>
          Cmd
          <Chevron />
        </StatusButton>
        <ConsoleInput placeholder="콘솔 명령을 입력하세요." aria-label="콘솔 명령" />
      </StatusGroup>
      <StatusGroup $push $left={11} $right={13}>
        <StatusButton>
          <Svg w={16}>
            <path d="M1 1h12l3 3v12H1z" fill="#8a8a8a" />
            <path d="M4 1h7v5H4zM4 9h8v7H4z" fill="#d0d0d0" />
            <circle cx="14.5" cy="14.5" r="5.5" fill={colors.panel} />
            <path d="M14.500 9.500v10M10 12l9 5M19 12l-9 5" stroke="currentColor" strokeWidth="1.8" />
          </Svg>
          3개 저장되지 않음
        </StatusButton>
      </StatusGroup>
      <StatusGroup $left={14} $right={18}>
        <StatusButton>
          <Svg w={14} h={16} box="0 0 14 16">
            <path d="M3 3v10M11 3v2c0 3-4 3-8 4" fill="none" stroke="currentColor" strokeWidth="1.3" />
            <circle cx="3" cy="2.5" r="2.4" />
            <circle cx="11" cy="2.5" r="2.4" />
            <circle cx="3" cy="13.5" r="2.4" />
          </Svg>
          리비전 컨트롤
          <Chevron />
        </StatusButton>
      </StatusGroup>
    </StatusBar>
  );
}

const Star = ({ x, y, r, color }) => (
  <path
    d={`M${x} ${y - r}q${r * 0.2} ${r * 0.8} ${r} ${r}q${-r * 0.8} ${r * 0.2} ${-r} ${r}q${-r * 0.2} ${-r * 0.8} ${-r} ${-r}q${r * 0.8} ${-r * 0.2} ${r} ${-r}z`}
    fill={color}
    stroke={color}
    strokeLinejoin="round"
    strokeWidth="2"
  />
);

const apps = [
  {
    name: "작업 보기",
    icon: (
      <Svg w={18} box="0 0 18 18">
        <path d="M1.500 5.500h9v7h-9zM1.500 1v2h9V1M1.500 17v-2h9v2M14.500 1v4M14.500 9v8" fill="none" stroke="#fff" strokeWidth="1.3" />
        <path d="M13 5.500h3v3h-3z" fill="#fff" />
      </Svg>
    ),
  },
  {
    name: "Copilot",
    icon: (
      <Svg w={24} box="0 0 24 24">
        <defs>
          <linearGradient id="copA" x2="0" y2="1"><stop stopColor="#1f8df0" /><stop offset=".55" stopColor="#3fb878" /><stop offset="1" stopColor="#f4d020" /></linearGradient>
          <linearGradient id="copB" x2="0" y2="1"><stop stopColor="#a56bf0" /><stop offset=".5" stopColor="#ee5d92" /><stop offset="1" stopColor="#f7a04a" /></linearGradient>
        </defs>
        <path d="M8 2h6c2 0 2.500 1.500 3 3l.5 2h-3c-2 0-2.700 1-3.200 3L9.500 16c-.5 2-1.500 2.500-3.500 2.500H4C1.500 18.500.8 16.500 1.500 14L4.500 5C5.200 3 6 2 8 2z" fill="url(#copA)" />
        <path d="M13 2h1c2 0 2.500 1.500 3 3l.5 2h-4z" fill="#2350c8" />
        <path d="M16 22h-6c-2 0-2.500-1.500-3-3l-.5-1.500H9c2 0 2.800-1 3.300-3L14 8.500C14.500 6.500 15.500 6 17.500 6H20c2.500 0 3.200 2 2.500 4.500L19.500 19c-.7 2-1.500 3-3.500 3z" fill="url(#copB)" />
      </Svg>
    ),
  },
  {
    name: "Edge",
    icon: (
      <Svg w={24} box="0 0 24 24">
        <defs>
          <linearGradient id="edge"><stop stopColor="#1b9de2" /><stop offset="1" stopColor="#5bd65b" /></linearGradient>
        </defs>
        <circle cx="12" cy="12" r="11.5" fill="#1a6fc9" />
        <path d="M.6 11C1 4.500 6 .5 12 .5c7 0 11.500 5 11.500 10 0 3.500-2.500 5.500-6 5.500-2.500 0-3.800-1-3-2.500 1.500-3-.5-6-5-6-4.500 0-8 2-8.900 3.500z" fill="url(#edge)" />
        <path d="M9 9c-4 3-3.500 11 4 14 4 .3 7-1.500 8.500-4-6 2-11-.5-11-5.500 0-2 .5-3 1-4z" fill="#124f9e" />
        <path d="M14.500 13.500c-.8 1.500.5 2.500 3 2.500 2.500 0 5-1 6.500-3.500v6c-.6.400-1.500 1-2.500 1-5 1-9-2-8.500-5.500z" fill="#20363f" />
      </Svg>
    ),
  },
  {
    name: "파일 탐색기",
    running: true,
    icon: (
      <Svg w={24} box="0 0 24 24">
        <path d="M1 3h8l2 2h12v4H1z" fill="#e0a21c" />
        <path d="M1 5.500h22V21H1z" fill="#fbd66a" />
        <path d="M5 13h15v8h-4v-4H9v4H5z" fill="#3f8fd6" />
      </Svg>
    ),
  },
  {
    name: "Outlook",
    icon: (
      <Svg w={24} box="0 0 24 24">
        <path d="M6 9l10-8 8 7v12H6z" fill="#1066b5" />
        <path d="M8 3h12v9H8z" fill="#1c86d8" />
        <path d="M14 2.500h6v7l-6 3z" fill="#2b9ff0" />
        <path d="M6 22L24 9v12c0 1-1 2-2 2H8z" fill="#50d0f8" />
        <path d="M6 12l15 11H8c-1 0-2-1-2-2z" fill="#1a9be8" />
        <rect y="6" width="14" height="13" rx="1.5" fill="#0f66be" />
        <ellipse cx="7" cy="12.5" rx="3" ry="3.5" fill="none" stroke="#fff" strokeWidth="1.8" />
      </Svg>
    ),
  },
  {
    name: "Chrome",
    running: true,
    icon: (
      <Svg w={24} box="0 0 24 24">
        <circle cx="12" cy="12" r="11.5" fill="#fbc116" />
        <path d="M12 12H8L2 6.200a11.500 11.500 0 0 0 9 17.300l5-9.500z" fill="#269f48" />
        <path d="M12 6.200h10A11.500 11.500 0 0 0 2 6.200l5 8.700z" fill="#e33b2e" />
        <circle cx="12" cy="12" r="5.8" fill="#fff" />
        <circle cx="12" cy="12" r="4.6" fill="#2f7de9" />
      </Svg>
    ),
  },
  {
    name: "Unreal Editor",
    running: true,
    active: true,
    icon: <EngineMark w={24} rim="#fff" ink="#fff" />,
  },
  {
    name: "동영상",
    running: true,
    icon: (
      <Svg w={24} box="0 0 24 24">
        <path d="M0 3l23-3 1 5.500H0z" fill="#2cb0e8" />
        <path d="M6 2.300l-3 4M13 1.300l-3 4M20 .5l-3 4" stroke="#0c5c96" strokeWidth="2.5" />
        <path d="M0 6h24v17H0z" fill="#1a6fd0" />
        <path d="M0 6h12L0 20z" fill="#1f8ae0" />
        <path d="M9 9l9 6-9 6z" fill="#fff" />
      </Svg>
    ),
  },
];

const trayIcons = [
  {
    name: "숨겨진 아이콘",
    icon: <path d="M2 11l6-6 6 6" fill="none" stroke="#fff" strokeWidth="1.4" />,
  },
  {
    name: "모임",
    icon: <path d="M3.500 4.500h7v7h-7zM10.500 7l3-1.500v5L10.500 9M4 2.500c2-1.500 5-1.500 7 0M4 13.500c2 1.500 5 1.500 7 0" fill="none" stroke="#fff" strokeWidth="1.2" />,
  },
  {
    name: "업데이트",
    icon: (
      <>
        <path d="M1 4l14-2.500v11L1 14.500z" fill="none" stroke="#fff" strokeWidth="1.2" />
        <path d="M5 9c0-3 4-4 5-2M10 5v2.500H7.500M10 9c-1 2-4 2.500-5 .5" fill="none" stroke="#fff" />
        <circle cx="12.5" cy="13" r="3.5" fill="#e81123" />
      </>
    ),
  },
  {
    name: "네트워크",
    icon: <path d="M5.500 4.500H16v8H5.500M11 12.500V15M8 15.500h6M.7 2.500h4v4h-4zM2.700 6.500V14h4" fill="none" stroke="#fff" strokeWidth="1.2" />,
  },
  {
    name: "볼륨",
    icon: (
      <g fill="none" stroke="#fff" strokeWidth="1.2">
        <path d="M1 6.500h2.500l4-3.500v11l-4-3.500H1zM9.500 6.500c1 1 1 3 0 4" />
        <path d="M11.500 4.500c2 2 2 6 0 8M13.500 2.500c3 3 3 9 0 12" stroke="#9999aa" />
      </g>
    ),
  },
  {
    name: "연결 안 됨",
    icon: (
      <>
        <circle cx="8.5" cy="8.5" r="7.5" fill="#9fa3ad" />
        <path d="M5.500 5.500l6 6M11.500 5.500l-6 6" stroke="#1d2a44" strokeWidth="2" />
      </>
    ),
  },
];

function WindowsTaskbar() {
  return (
    <Taskbar>
      <TaskButton aria-label="시작">
        <Svg w={17} box="0 0 17 17">
          <path d="M0 2.400l7-1V8H0zM8 1.200L17 0v8H8zM0 9h7v6.600l-7-1zM8 9h9v8l-9-1.200z" fill="#fff" />
        </Svg>
      </TaskButton>
      <TaskSearch>
        <Svg w={16} box="0 0 16 16">
          <circle cx="10" cy="6" r="5.2" fill="none" stroke="#1a1a1a" strokeWidth="1.3" />
          <path d="M6.500 10L.8 15.500" stroke="#1a1a1a" strokeWidth="1.5" />
        </Svg>
        <TextInput placeholder="찾기" aria-label="찾기" />
        <Svg w={64} h={28} box="0 0 64 28">
          <Star x={25} y={12} r={11} color="#fbbc1d" />
          <Star x={47} y={16} r={5} color="#f8c63c" />
          <Star x={6} y={21} r={3.5} color="#1a9be8" />
          <circle cx="41" cy="3.5" r="2" fill="#e8552c" />
          <circle cx="59" cy="23" r="2" fill="#7bc043" />
        </Svg>
      </TaskSearch>
      {apps.map((a) => (
        <TaskButton key={a.name} aria-label={a.name} $active={a.active} $running={a.running}>
          {a.icon}
        </TaskButton>
      ))}
      <Tray>
        <Weather>
          <Svg w={24} box="0 0 24 24">
            <path d="M10 1c0 6 3 9 8 9-1 4-4 6-8 6-5 0-9-2-9-6 5 0 8-4 9-9z" fill="#f2a63a" />
            <path d="M5 23a5 5 0 0 1 0-9 7 7 0 0 1 12-1c4-1 7 2 7 5s-2 5-5 5z" fill="#b9d3fb" />
            <circle cx="18" cy="6" r="5.8" fill="#d2291c" />
            <text x="18" y="9.5" fontSize="9" textAnchor="middle" fill="#fff">1</text>
          </Svg>
          {"23°C  대체로 흐림"}
        </Weather>
        {trayIcons.map((t) => (
          <TrayButton key={t.name} aria-label={t.name}>
            <Svg w={17} box="0 0 17 17">{t.icon}</Svg>
          </TrayButton>
        ))}
        <TrayButton $width={34}><ImeMark>한</ImeMark></TrayButton>
        <Clock>
          오후 9:33
          <br />
          2025-06-14
        </Clock>
        <TrayButton $width={45} aria-label="알림">
          <Svg w={24} box="0 0 24 24">
            <path d="M0 1h16v12H7l-3 3v-3H0z" fill="#fff" />
            <path d="M2.500 4h11M2.500 7h11M2.500 10h6" stroke="#1c2744" />
            <circle cx="15.5" cy="16" r="7.5" fill="#3a3f4c" stroke="#8a8f9c" />
            <text x="15.5" y="20" fontSize="11" fontWeight="700" textAnchor="middle" fill="#fff">5</text>
          </Svg>
        </TrayButton>
      </Tray>
    </Taskbar>
  );
}

export default function App() {
  return (
    <Shell>
      <GlobalStyle />
      <TopBar />
      <MainToolbar />
      <Workspace>
        <LeftColumn />
        <Dock>
          <DockTabs>
            <PanelTab icon={<ViewportIcon />} label="뷰포트" active={false} closable={false} />
            <PanelTab icon={<FunctionIcon />} label="Construction Scr..." active={false} closable={false} />
            <PanelTab icon={<GraphIcon />} label="이벤트그래프" focused />
          </DockTabs>
          <EventGraph />
        </Dock>
        <SideColumn $width={476}>
          <Dock>
            <DockTabs>
              <PanelTab icon={<PencilIcon w={16} />} label="디테일" />
            </DockTabs>
            <DockBody $fill={colors.panel} />
          </Dock>
        </SideColumn>
      </Workspace>
      <EditorStatus />
      <WindowsTaskbar />
    </Shell>
  );
}
